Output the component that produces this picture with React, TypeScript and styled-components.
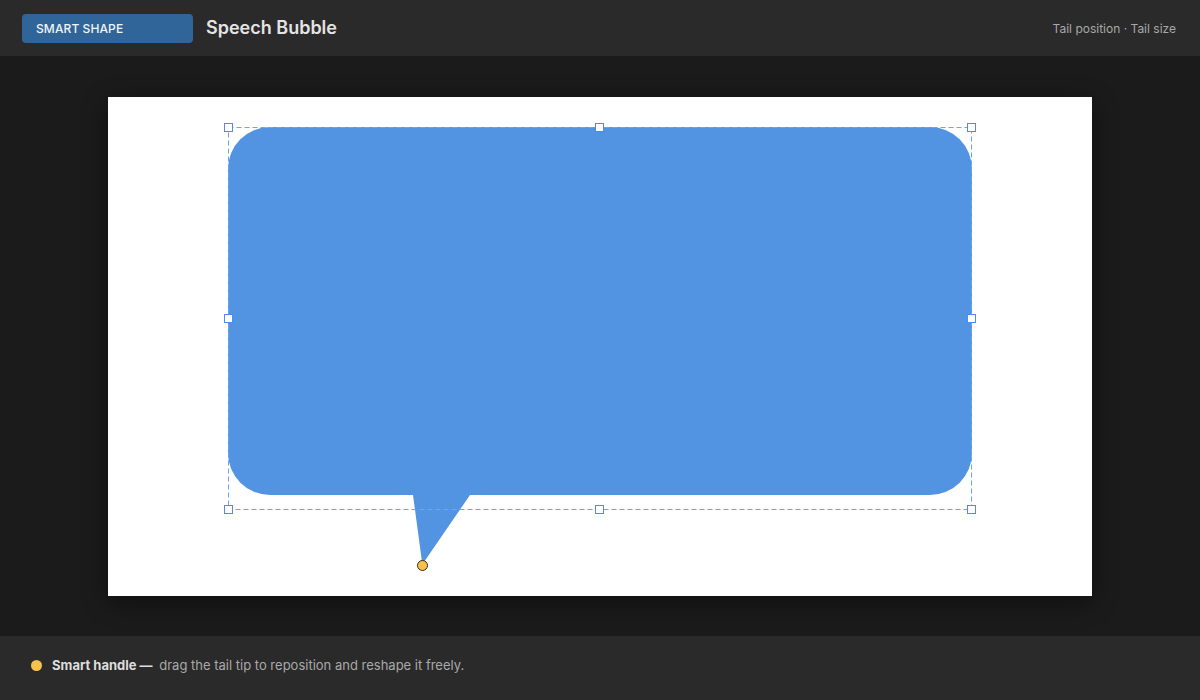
import React from "react";
import styled, { createGlobalStyle } from "styled-components";

const Global = createGlobalStyle`
  html, body { margin: 0; padding: 0; background: #1b1b1b; }
  body { font-family: Inter, "Noto Sans", sans-serif; -webkit-font-smoothing: antialiased; }
  * { box-sizing: border-box; }
`;

const Page = styled.div`
  width: 1200px;
  height: 700px;
  display: flex;
  flex-direction: column;
  background: #1b1b1b;
`;

const Header = styled.header`
  height: 56px;
  flex: none;
  background: #2a2a2a;
  display: flex;
  align-items: center;
  padding: 0 24px 0 22px;
  gap: 13px;
`;

const Badge = styled.div`
  width: 171px;
  height: 29px;
  border-radius: 4px;
  background: #2f6598;
  color: #f2f5f8;
  font-size: 12px;
  font-weight: 500;
  display: flex;
  align-items: center;
  padding-left: 14px;
  letter-spacing: 0.1px;
`;

const Title = styled.h1`
  margin: 0;
  font-size: 18px;
  font-weight: 600;
  color: #e4e4e4;
  flex: 1;
  margin-top: -2px;
`;

const Meta = styled.div`
  font-size: 12px;
  color: #a8a8a8;
`;

const Stage = styled.main`
  flex: 1;
  display: flex;
  align-items: center;
  justify-content: center;
`;

const Canvas = styled.div`
  width: 984px;
  height: 499px;
  background: #ffffff;
  box-shadow: 0 6px 24px rgba(0, 0, 0, 0.45);
  position: relative;
  margin-top: 1px;
`;

const Footer = styled.footer`
  height: 64px;
  flex: none;
  background: #2a2a2a;
  display: flex;
  align-items: center;
  padding: 0 31px 6px;
  gap: 10px;
  font-size: 13px;
`;

const Dot = styled.span`
  width: 11px;
  height: 11px;
  border-radius: 50%;
  background: #f6c24f;
  flex: none;
  margin-top: 1px;
`;

const Note = styled.p`
  margin: 0;
  color: #a9a9a9;
  strong {
    color: #dedede;
    font-weight: 700;
    margin-right: 3px;
  }
`;

const handles: [number, number][] = [
  [120, 30],
  [491, 30],
  [863, 30],
  [120, 221],
  [863, 221],
  [120, 412],
  [491, 412],
  [863, 412],
];

function Bubble() {
  const x0 = 120, y0 = 30, x1 = 864, y1 = 398, r = 42;
  const d = `M ${x0 + r} ${y0} H ${x1 - r} A ${r} ${r} 0 0 1 ${x1} ${y0 + r} V ${y1 - r} A ${r} ${r} 0 0 1 ${x1 - r} ${y1} H 362 L 316 465 L 314 465 L 305 ${y1} H ${x0 + r} A ${r} ${r} 0 0 1 ${x0} ${y1 - r} V ${y0 + r} A ${r} ${r} 0 0 1 ${x0 + r} ${y0} Z`;
  return (
    <svg width="984" height="499" viewBox="0 0 984 499" style={{ display: "block" }}>
      <path d={d} fill="#5294e2" />
      <rect x="120.5" y="30.5" width="743" height="382" fill="none" stroke="#66a8f0" strokeWidth="1" strokeDasharray="5 3" />
      {handles.map(([x, y], i) => (
        <rect key={i} x={x - 3.5} y={y - 3.5} width="8" height="8" fill="#ffffff" stroke="#4a8fe6" strokeWidth="1" />
      ))}
      <circle cx="314.5" cy="468.5" r="5" fill="#f6c24f" stroke="#3a2e10" strokeWidth="1" />
    </svg>
  );
}

export default function App() {
  return (
    <>
      <Global />
      <Page>
        <Header>
          <Badge>SMART SHAPE</Badge>
          <Title>Speech Bubble</Title>
          <Meta>Tail position · Tail size</Meta>
        </Header>
        <Stage>
          <Canvas>
            <Bubble />
          </Canvas>
        </Stage>
        <Footer>
          <Dot />
          <Note>
            <strong>Smart handle —</strong> drag the tail tip to reposition and reshape it freely.
          </Note>
        </Footer>
      </Page>
    </>
  );
}
